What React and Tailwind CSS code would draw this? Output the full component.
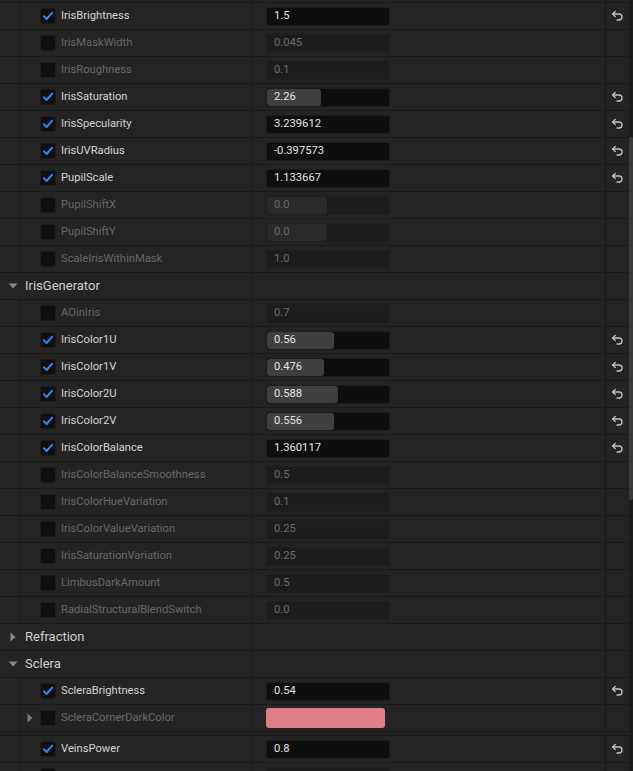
import React from "react";

const rows = [
  { t: "p", name: "IrisBrightness", on: true, v: "1.5" },
  { t: "p", name: "IrisMaskWidth", on: false, v: "0.045" },
  { t: "p", name: "IrisRoughness", on: false, v: "0.1" },
  { t: "p", name: "IrisSaturation", on: true, v: "2.26", fill: 54 },
  { t: "p", name: "IrisSpecularity", on: true, v: "3.239612" },
  { t: "p", name: "IrisUVRadius", on: true, v: "-0.397573" },
  { t: "p", name: "PupilScale", on: true, v: "1.133667" },
  { t: "p", name: "PupilShiftX", on: false, v: "0.0", fill: 60 },
  { t: "p", name: "PupilShiftY", on: false, v: "0.0", fill: 60 },
  { t: "p", name: "ScaleIrisWithinMask", on: false, v: "1.0" },
  { t: "c", name: "IrisGenerator", open: true },
  { t: "p", name: "AOinIris", on: false, v: "0.7" },
  { t: "p", name: "IrisColor1U", on: true, v: "0.56", fill: 67 },
  { t: "p", name: "IrisColor1V", on: true, v: "0.476", fill: 57 },
  { t: "p", name: "IrisColor2U", on: true, v: "0.588", fill: 71 },
  { t: "p", name: "IrisColor2V", on: true, v: "0.556", fill: 67 },
  { t: "p", name: "IrisColorBalance", on: true, v: "1.360117" },
  { t: "p", name: "IrisColorBalanceSmoothness", on: false, v: "0.5" },
  { t: "p", name: "IrisColorHueVariation", on: false, v: "0.1" },
  { t: "p", name: "IrisColorValueVariation", on: false, v: "0.25" },
  { t: "p", name: "IrisSaturationVariation", on: false, v: "0.25" },
  { t: "p", name: "LimbusDarkAmount", on: false, v: "0.5" },
  { t: "p", name: "RadialStructuralBlendSwitch", on: false, v: "0.0" },
  { t: "c", name: "Refraction", open: false },
  { t: "c", name: "Sclera", open: true },
  { t: "p", name: "ScleraBrightness", on: true, v: "0.54" },
  { t: "color", name: "ScleraCornerDarkColor", on: false },
  { t: "gap" },
  { t: "p", name: "VeinsPower", on: true, v: "0.8" },
  { t: "p", name: "", on: false, v: "" },
];

function Check({ on }) {
  return (
    <div className="w-[16px] h-[16px] rounded-[2px] bg-[#0f0f0f] border border-[#1c1c1c] flex items-center justify-center shrink-0">
      {on && (
        <svg width="12" height="12" viewBox="0 0 12 12">
          <path d="M1.8 6.2 L4.6 9 L10.2 2.6" fill="none" stroke="#2b8df5" strokeWidth="1.9" strokeLinecap="round" strokeLinejoin="round" />
        </svg>
      )}
    </div>
  );
}

function Reset() {
  return (
    <svg width="13" height="12" viewBox="0 0 13 12">
      <path d="M4.2 1.5 L1.6 4 L4.2 6.5" fill="none" stroke="#c4c4c4" strokeWidth="1.3" strokeLinecap="round" strokeLinejoin="round" />
      <path d="M1.8 4 H8 a3 3 0 0 1 0 6 H6" fill="none" stroke="#c4c4c4" strokeWidth="1.3" strokeLinecap="round" strokeLinejoin="round" />
    </svg>
  );
}

function Tri({ open, color = "#8a8a8a" }) {
  return open ? (
    <svg width="10" height="10" viewBox="0 0 10 10">
      <path d="M0.5 2.5 H9.5 L5 7.5 Z" fill={color} />
    </svg>
  ) : (
    <svg width="10" height="10" viewBox="0 0 10 10">
      <path d="M2.5 0.5 V9.5 L7.5 5 Z" fill={color} />
    </svg>
  );
}

function PropRow({ r }) {
  const on = r.on;
  return (
    <div className="flex h-[27px] border-t border-[#1a1a1a]">
      <div className="w-[20px] shrink-0 border-r border-[#1b1b1b] bg-[#262626]" />
      <div className="w-[232px] shrink-0 flex items-center border-r border-[#1a1a1a]">
        <div className="w-[20px] shrink-0 flex items-center justify-center">
          {r.t === "color" && <Tri open={false} color="#7a7a7a" />}
        </div>
        <Check on={on} />
        <span className={`ml-[5px] text-[11.2px] whitespace-nowrap ${on ? "text-[#d4d4d4]" : "text-[#676767]"}`}>{r.name}</span>
      </div>
      <div className="w-[354px] shrink-0 flex items-center pl-[14px] border-r border-[#1a1a1a]">
        {r.t === "color" ? (
          <div className="w-[119px] h-[20px] rounded-[3px] bg-[#e07e87]" />
        ) : (
          <div className={`relative w-[124px] h-[19px] rounded-[3px] border ${on ? "bg-[#0e0e0e] border-[#1c1c1c]" : "bg-[#1d1d1d] border-[#1f1f1f]"} overflow-hidden`}>
            {r.fill && (
              <div
                className={`absolute left-0 top-0 bottom-0 rounded-[3px] ${on ? "bg-[#3f3f3f]" : "bg-[#2a2a2a]"}`}
                style={{ width: r.fill }}
              />
            )}
            <span className={`absolute left-[7px] top-0 bottom-0 flex items-center text-[11.2px] ${on ? "text-[#e6e6e6]" : "text-[#6c6c6c]"}`}>{r.v}</span>
          </div>
        )}
      </div>
      <div className="w-[23px] shrink-0 flex items-center justify-center">{on && r.name && <Reset />}</div>
    </div>
  );
}

function CatRow({ r }) {
  return (
    <div className="flex h-[27px] border-t border-[#1a1a1a]">
      <div className="w-[252px] shrink-0 flex items-center border-r border-[#1a1a1a]">
        <div className="w-[25px] shrink-0 flex items-center justify-center pl-[1px]">
          <Tri open={r.open} />
        </div>
        <span className="text-[13px] text-[#d0d0d0] whitespace-nowrap">{r.name}</span>
      </div>
      <div className="w-[354px] shrink-0 border-r border-[#1a1a1a]" />
      <div className="w-[23px] shrink-0" />
    </div>
  );
}

export default function App() {
  return (
    <div className="relative w-[633px] h-[771px] overflow-hidden bg-[#242424]" style={{ fontFamily: "Roboto, 'Noto Sans', sans-serif" }}>
      <div className="flex">
        <div className="w-[629px] flex flex-col">
          <div className="flex h-[2px]">
            <div className="w-[20px] border-r border-[#1b1b1b] bg-[#262626]" />
            <div className="w-[232px] border-r border-[#1a1a1a]" />
            <div className="w-[354px] border-r border-[#1a1a1a]" />
          </div>
          {rows.map((r, i) => {
            if (r.t === "c") return <CatRow key={i} r={r} />;
            if (r.t === "gap")
              return <div key={i} className="h-[4px] border-t border-[#1a1a1a] bg-[#222222]" />;
            return <PropRow key={i} r={r} />;
          })}
        </div>
        <div className="w-[4px] h-[771px] bg-[#1c1c1c] flex flex-col">
          <div className="h-[137px]" />
          <div className="h-[363px] bg-[#3a3a3a] rounded-[2px]" />
        </div>
      </div>
    </div>
  );
}
